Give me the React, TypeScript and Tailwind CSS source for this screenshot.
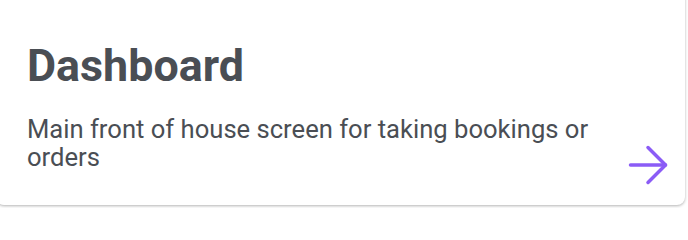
export default function App() {
  return (
    <div className="w-[688px] h-[208px] overflow-hidden bg-white font-['Roboto',sans-serif] text-[#4a4e54]">
      <div className="-ml-[4px] -mt-[10px] w-[689px] h-[215px] rounded-lg bg-white shadow-[0_1px_3px_rgba(0,0,0,0.3)] pt-[50px] pl-[31px] pr-[7px]">
        <h1 className="text-[44.8px] leading-[52px] font-bold">Dashboard</h1>
        <div className="mt-[23px] flex items-start">
          <p className="flex-1 text-[25.6px] leading-[28.4px]">
            Main front of house screen for taking bookings or orders
          </p>
          <svg
            className="mt-[20px] shrink-0"
            width="60"
            height="60"
            viewBox="0 0 24 24"
            fill="none"
            stroke="#8b5cf6"
            strokeWidth="1.4"
            strokeLinecap="round"
            strokeLinejoin="round"
          >
            <path d="M5 12h14" />
            <path d="m12 5 7 7-7 7" />
          </svg>
        </div>
      </div>
    </div>
  )
}
